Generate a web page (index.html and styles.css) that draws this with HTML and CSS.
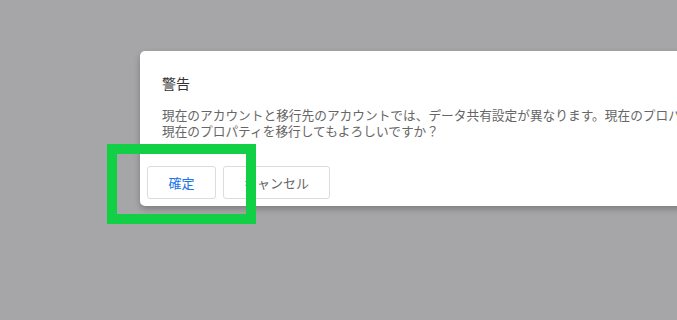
FILE: index.html
```html
<!DOCTYPE html>
<html lang="ja">
<head>
    <meta charset="UTF-8">
    <meta name="viewport" content="width=device-width, initial-scale=1.0">
    <title>警告</title>
    <link rel="stylesheet" href="styles.css">
</head>
<body>

    <div class="dialog">
        <div class="content">
            <h2>警告</h2>
            <p class="message">現在のアカウントと移行先のアカウントでは、データ共有設定が異なります。現在のプロパティのデータ共有設定は移行先のアカウントの設定に変更されます。</p>
            <p class="message">現在のプロパティを移行してもよろしいですか？</p>
        </div>
        <div class="actions">
            <button class="btn primary">確定</button>
            <button class="btn">キャンセル</button>
        </div>
    </div>

    <div class="highlight"></div>

</body>
</html>
```

FILE: styles.css
```css
* {
  margin: 0;
  padding: 0;
  box-sizing: border-box;
}
body {
    font-family: "Noto Sans CJK JP", "Liberation Sans", sans-serif;
    background-color: #a6a6a8;
    height: 100vh;
    overflow: hidden;
    position: relative;
}
.dialog {
    width: 760px;
    margin: 51px 0 0 140px;
    background: white;
    border-radius: 5px;
    box-shadow: 0 3px 6px rgba(0, 0, 0, 0.25);
}
.content {
    padding: 22px 22px 0 22px;
}
h2 {
    font-size: 14px;
    font-weight: normal;
    line-height: 20px;
    color: #333;
    margin-bottom: 14px;
}
.message {
    font-size: 12.7px;
    line-height: 16px;
    color: #666;
    white-space: nowrap;
}
.actions {
    display: flex;
    gap: 7px;
    padding: 27px 0 7px 7px;
}
.btn {
    font-family: inherit;
    font-size: 13px;
    height: 33px;
    padding: 0 20px;
    background: white;
    color: #666;
    border: 1px solid #dcdcdc;
    border-radius: 3px;
}
.btn.primary {
    width: 69px;
    color: #1a73e8;
}
.btn:not(.primary) {
    width: 107px;
}
.highlight {
    position: absolute;
    left: 107px;
    top: 144px;
    width: 149px;
    height: 80px;
    border: 10px solid #12d046;
}
```
